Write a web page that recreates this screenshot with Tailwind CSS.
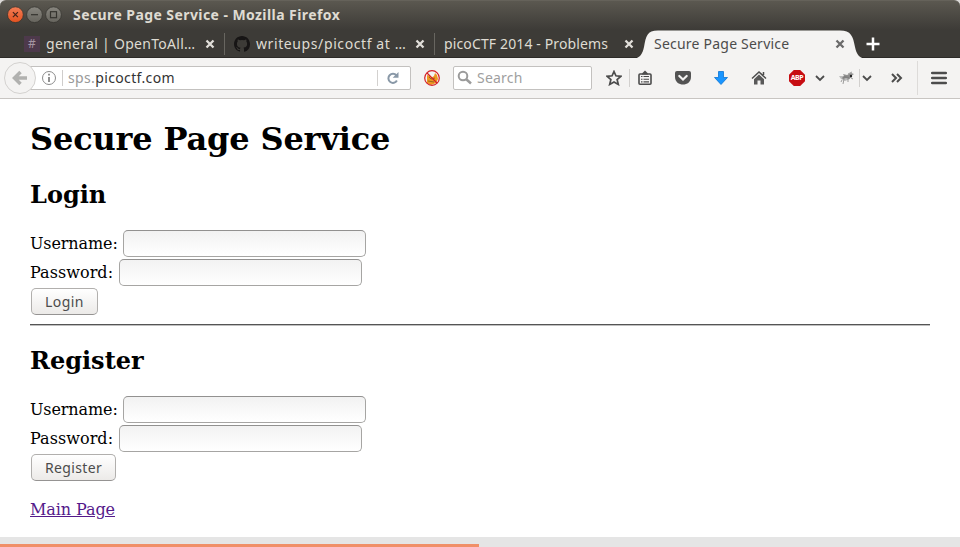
<!DOCTYPE html>
<html lang="en">
<head>
<meta charset="utf-8">
<title>Secure Page Service</title>
<script src="https://cdn.jsdelivr.net/npm/@tailwindcss/browser@4"></script>
</head>
<body class="w-[960px] h-[547px] overflow-hidden bg-[#dcdad8] font-['Noto_Sans',sans-serif] text-[14px]">
<div class="flex flex-col w-[960px] h-[547px]">
  <!-- Title bar -->
  <header class="h-[30px] shrink-0 rounded-t-[6px] border-t border-[#65625a] bg-linear-to-b from-[#5b5850] to-[#3d3b37] flex items-center pl-[7px]">
    <svg width="56" height="18" viewBox="0 0 56 18" class="shrink-0 -mt-[2px]">
      <defs><linearGradient id="o" x2="0" y2="1"><stop stop-color="#f37d56"/><stop offset="1" stop-color="#e4521f"/></linearGradient><linearGradient id="g" x2="0" y2="1"><stop stop-color="#88867f"/><stop offset="1" stop-color="#66645d"/></linearGradient></defs>
      <circle cx="8.4" cy="8.700" r="7.900" fill="url(#o)" stroke="#35332f" stroke-width=".8"/>
      <path d="M5.900 6.200l5 5m0-5l-5 5" stroke="#43231a" stroke-width="1.200"/>
      <circle cx="27.500" cy="8.700" r="7.900" fill="url(#g)" stroke="#35332f" stroke-width=".8"/>
      <path d="M24 8.700h7" stroke="#35342f" stroke-width="1.200"/>
      <circle cx="46.500" cy="8.700" r="7.900" fill="url(#g)" stroke="#35332f" stroke-width=".8"/>
      <rect x="43.500" y="5.700" width="6" height="6" fill="none" stroke="#35342f" stroke-width="1.200"/>
    </svg>
    <span class="ml-[10px] -mt-[2px] leading-5 font-bold text-[#dfdbd2] whitespace-nowrap tracking-[0.42px]">Secure Page Service - Mozilla Firefox</span>
  </header>
  <!-- Tab strip -->
  <nav class="h-[28px] shrink-0 bg-[#3d3b37] border-b border-[#2d2b28] flex items-center text-[#dfdbd2] leading-7 whitespace-nowrap">
    <div class="w-[225px] h-[22px] flex items-center pl-6 border-r border-[#686660]">
      <span class="w-4 h-4 bg-[#4d394b] text-[#a596a3] text-[12px] leading-4 text-center">#</span>
      <span class="ml-[6px] w-[152px] tracking-[0.29px]">general | OpenToAll…</span>
      <svg width="10" height="10" class="ml-[7px]"><path d="M1.500 1.500l7 7m0-7l-7 7" stroke="#e2dfda" stroke-width="2.300"/></svg>
    </div>
    <div class="w-[210px] h-[22px] flex items-center pl-[9px] border-r border-[#686660]">
      <svg width="16" height="16" viewBox="0 0 16 16" fill="#171515"><path d="M8 0C3.580 0 0 3.580 0 8c0 3.540 2.290 6.530 5.470 7.590.4.070.55-.17.55-.38v-1.340c-2.010.37-2.530-.49-2.690-.94-.09-.23-.48-.94-.82-1.130-.28-.15-.68-.52-.01-.53.63-.01 1.080.58 1.230.82.72 1.210 1.870.87 2.330.66.070-.52.28-.87.51-1.070-1.780-.2-3.640-.89-3.640-3.950 0-.87.31-1.590.82-2.150-.08-.2-.36-1.020.08-2.120 0 0 .67-.21 2.200.82a7.600 7.600 0 0 1 4 0c1.530-1.040 2.200-.82 2.200-.82.44 1.100.16 1.920.08 2.120.51.56.82 1.270.82 2.150 0 3.070-1.870 3.750-3.650 3.950.29.25.54.73.54 1.480v2.200c0 .21.15.46.55.38A8 8 0 0 0 16 8c0-4.420-3.580-8-8-8z"/></svg>
      <span class="ml-[6px] w-[152px] tracking-[0.6px]">writeups/picoctf at …</span>
      <svg width="10" height="10" class="ml-[7px]"><path d="M1.500 1.500l7 7m0-7l-7 7" stroke="#e2dfda" stroke-width="2.300"/></svg>
    </div>
    <div class="w-[199px] flex items-center pl-[9px]">
      <span class="w-[173px] tracking-[0.13px]">picoCTF 2014 - Problems</span>
      <svg width="10" height="10" class="ml-[9px] shrink-0"><path d="M1.500 1.500l7 7m0-7l-7 7" stroke="#e2dfda" stroke-width="2.300"/></svg>
    </div>
    <div class="relative w-[232px] h-7 flex items-center pl-5 text-[#4c4c4c]">
      <svg class="absolute left-0 top-0" width="232" height="29" viewBox="0 0 232 29"><path d="M0 28.500C6 28 8.500 24 10 17C12 6 13 .5 24 .5H206C217 .5 219 6 221 17C222.500 24 225 28 231 28.500Z" fill="#f4f3f2"/></svg>
      <span class="relative w-[174px] tracking-[0.22px]">Secure Page Service</span>
      <svg width="10" height="10" class="relative ml-[7px]"><path d="M1.500 1.500l7 7m0-7l-7 7" stroke="#6a6a6a" stroke-width="2.300"/></svg>
    </div>
    <svg width="14" height="14"><path d="M7 .5v13M.5 7h13" stroke="#fff" stroke-width="2.500"/></svg>
  </nav>
  <!-- Toolbar -->
  <section class="h-[41px] shrink-0 bg-[#f4f3f2] border-b border-[#c8c5c2] flex items-center text-[#4c4c4c]">
    <svg width="32" height="32" viewBox="0 0 32 32" class="relative z-10 ml-1 shrink-0 mr-[-2px]"><circle cx="16" cy="16" r="15.500" fill="#f4f3f2" stroke="#d3d1cf"/><path d="M16.500 10L10.500 16l6 6M11 16h12" fill="none" stroke="#b1b1af" stroke-width="3.500"/></svg>
    <div class="ml-[-5px] w-[382px] h-6 bg-white border border-[#c3c1bf] rounded-r-[2px] flex items-center shrink-0 leading-6">
      <svg width="16" height="16" viewBox="0 0 16 16" class="ml-[11px]"><circle cx="8" cy="8" r="6.500" fill="none" stroke="#8c8c8c"/><path d="M8 3.800v1.800M8 7v5" stroke="#858585" stroke-width="1.800"/></svg>
      <span class="ml-[5px] w-px h-4 bg-[#cfcdcc]"></span>
      <span class="ml-[5px] w-[309px] whitespace-nowrap text-[#333] tracking-[0.36px]"><span class="text-[#999]">sps.</span>picoctf.com</span>
      <span class="w-px h-4 bg-[#d3d1cf]"></span>
      <svg width="12" height="12" viewBox="0 0 12 12" class="ml-[9px]"><path d="M9.400 3.500A4.500 4.500 0 1 0 9.900 8.500" fill="none" stroke="#8998a7" stroke-width="2"/><path d="M11.500 0v5.800H5.700z" fill="#8998a7"/></svg>
    </div>
    <svg width="16" height="16" viewBox="0 0 16 16" class="ml-[13px] shrink-0"><path d="M3 5l3 1 1 2 3-2 1-3 2 2 1 4-2 4-5 2-4-2z" fill="#ef9821"/><path d="M5 7l2 2 4-1M4 11l6 1" fill="none" stroke="#98651f"/><circle cx="8" cy="8" r="7.300" fill="none" stroke="#d42127" stroke-width="1.200"/><path d="M3 3l10 10" stroke="#d42127" stroke-width="1.200"/></svg>
    <div class="ml-[13px] w-[139px] h-6 bg-white border border-[#c3c1bf] rounded-[2px] flex items-center shrink-0 leading-6 text-[#a0a0a0]">
      <svg width="16" height="16" viewBox="0 0 16 16" class="ml-[3px]"><circle cx="6" cy="6" r="4.300" fill="none" stroke="#9b9b9b" stroke-width="2"/><path d="M9 9l5 4.500" stroke="#9b9b9b" stroke-width="2.500"/></svg>
      <span class="ml-1 tracking-[0.2px]">Search</span>
    </div>
    <svg width="16" height="16" viewBox="0 0 16 16" class="ml-[14px] shrink-0"><path d="M8 1.500l1.900 4.300 4.900.5-3.700 3.200 1.200 4.900L8 11.900l-4.300 2.500 1.200-4.900L1.200 6.300l4.900-.5z" fill="none" stroke="#4c4c4c" stroke-width="1.700"/></svg>
    <span class="ml-[7px] w-px h-[18px] bg-[#d2d0ce]"></span>
    <svg width="16" height="16" viewBox="0 0 16 16" class="ml-[7px] shrink-0"><rect x="2" y="4" width="12" height="10.200" rx="1" fill="none" stroke="#4c4c4c" stroke-width="1.600"/><path d="M5 3.500L8 .5l3 3v1H5z" fill="#4c4c4c"/><path d="M4 6.500h1.500m1 0H12M4 9.200h1.500m1 0H12M4 11.900h1.500m1 0H12" stroke="#4c4c4c" stroke-width="1.100"/></svg>
    <svg width="16" height="16" viewBox="0 0 16 16" class="ml-[22px] shrink-0"><path d="M2 1h12q2 0 2 2v4c0 10-16 10-16 0V3q0-2 2-2z" fill="#535353"/><path d="M4.300 6L8 9.500 11.700 6" fill="none" stroke="#f4f3f2" stroke-width="2.200" stroke-linecap="round"/></svg>
    <svg width="16" height="16" viewBox="0 0 16 16" class="ml-[22px] shrink-0"><path d="M5.500 1.500h5v6h4L8 14.500 1.500 7.500h4z" fill="#1995ff" stroke="#0a74d4" stroke-width=".8"/></svg>
    <svg width="16" height="16" viewBox="0 0 16 16" class="ml-[22px] shrink-0"><path d="M1 8.500l7-6.500 7 6.500M12.500 5V2" fill="none" stroke="#4c4c4c" stroke-width="1.500"/><path d="M3 9.200l5-4.700 5 4.700v5.300H9.500v-4h-3v4H3z" fill="#595959"/></svg>
    <span class="ml-[22px] w-4 h-4 shrink-0 bg-[#c70d12] flex items-center justify-center text-white font-bold text-[7px] leading-4 tracking-[-0.4px] [clip-path:polygon(30%_0,70%_0,100%_30%,100%_70%,70%_100%,30%_100%,0_70%,0_30%)]">ABP</span>
    <svg width="10" height="8" viewBox="0 0 10 8" class="ml-[10px] shrink-0"><path d="M1 2l4 4 4-4" fill="none" stroke="#4c4c4c" stroke-width="1.800"/></svg>
    <svg width="16" height="14" viewBox="0 0 16 14" class="ml-[14px] shrink-0"><path d="M0 5l6 0 4 1 1 2-5 2-4-2z" fill="#bbb"/><path d="M4 3l4 1 4-2 3 1-3 2 1 1-3 2-3-1-3 1-1-1 2-2z" fill="#666" fill-opacity=".7"/><path d="M3 9l-1 2M5 8l-1 5M9 8v3M12 7l2 1M9 3l4-2" stroke="#777" stroke-width=".7"/><circle cx="12" cy="5" r="1.200" fill="#222"/></svg>
    <span class="ml-[4px] w-px h-[18px] bg-[#d2d0ce]"></span>
    <svg width="10" height="8" viewBox="0 0 10 8" class="ml-[2px] shrink-0"><path d="M1 2l4 4 4-4" fill="none" stroke="#4c4c4c" stroke-width="1.800"/></svg>
    <svg width="12" height="10" viewBox="0 0 12 10" class="ml-[19px] shrink-0"><path d="M1 1l4 4-4 4M6 1l4 4-4 4" fill="none" stroke="#4c4c4c" stroke-width="2"/></svg>
    <span class="ml-[14px] w-px h-[34px] bg-[#dddbd9]"></span>
    <svg width="16" height="14" viewBox="0 0 16 14" class="ml-[13px] shrink-0"><path d="M1.200 2h13.600M1.200 7h13.600M1.200 12h13.600" stroke="#4c4c4c" stroke-width="2.600" stroke-linecap="round"/></svg>
  </section>
  <!-- Page -->
  <main class="h-[438px] shrink-0 bg-white px-[30px] pt-[21px] font-['DejaVu_Serif',serif] text-black text-[16px]">
    <h1 class="text-[32px] leading-[38px] font-bold tracking-[-0.16px]">Secure Page Service</h1>
    <section class="mt-[23px]">
      <h2 class="text-[24px] leading-7 font-bold">Login</h2>
      <form class="mt-[21px]">
        <label class="flex items-center h-[27px]"><span class="w-[93px] tracking-[-0.11px]">Username:</span><input class="w-[243px] h-[27px] border border-[#a6a5a3] border-t-[#929190] rounded-[5px] bg-linear-to-b from-[#f2f2f2] to-white"></label>
        <label class="mt-[2px] flex items-center h-[27px]"><span class="w-[89px] tracking-[0.05px]">Password:</span><input class="w-[243px] h-[27px] border border-[#a6a5a3] border-t-[#929190] rounded-[5px] bg-linear-to-b from-[#f2f2f2] to-white"></label>
        <button type="button" class="block mt-[2px] ml-px w-[67px] h-[27px] border border-[#b1afad] border-b-[#959392] rounded-[5px] bg-linear-to-b from-white to-[#eceae8] font-['Noto_Sans',sans-serif] text-[14px] leading-6 tracking-[0.45px] text-[#4c4c4c]">Login</button>
      </form>
    </section>
    <div class="mt-[9px] h-[2px] border-t border-t-[#555] bg-[#c0c0c0]"></div>
    <section class="mt-[21px]">
      <h2 class="text-[24px] leading-7 font-bold">Register</h2>
      <form class="mt-[21px]">
        <label class="flex items-center h-[27px]"><span class="w-[93px] tracking-[-0.11px]">Username:</span><input class="w-[243px] h-[27px] border border-[#a6a5a3] border-t-[#929190] rounded-[5px] bg-linear-to-b from-[#f2f2f2] to-white"></label>
        <label class="mt-[2px] flex items-center h-[27px]"><span class="w-[89px] tracking-[0.05px]">Password:</span><input class="w-[243px] h-[27px] border border-[#a6a5a3] border-t-[#929190] rounded-[5px] bg-linear-to-b from-[#f2f2f2] to-white"></label>
        <button type="button" class="block mt-[2px] ml-px w-[85px] h-[27px] border border-[#b1afad] border-b-[#959392] rounded-[5px] bg-linear-to-b from-white to-[#eceae8] font-['Noto_Sans',sans-serif] text-[14px] leading-6 tracking-[0.35px] text-[#4c4c4c]">Register</button>
      </form>
    </section>
    <a href="#" class="block mt-[19px] w-fit leading-5 underline tracking-[-0.08px] text-[#551a8b]">Main Page</a>
  </main>
  <footer class="h-[10px] shrink-0 bg-[#e5e5e5] flex items-end"><div class="w-[479px] h-[3px] bg-[#f08f68]"></div></footer>
</div>
</body>
</html>
